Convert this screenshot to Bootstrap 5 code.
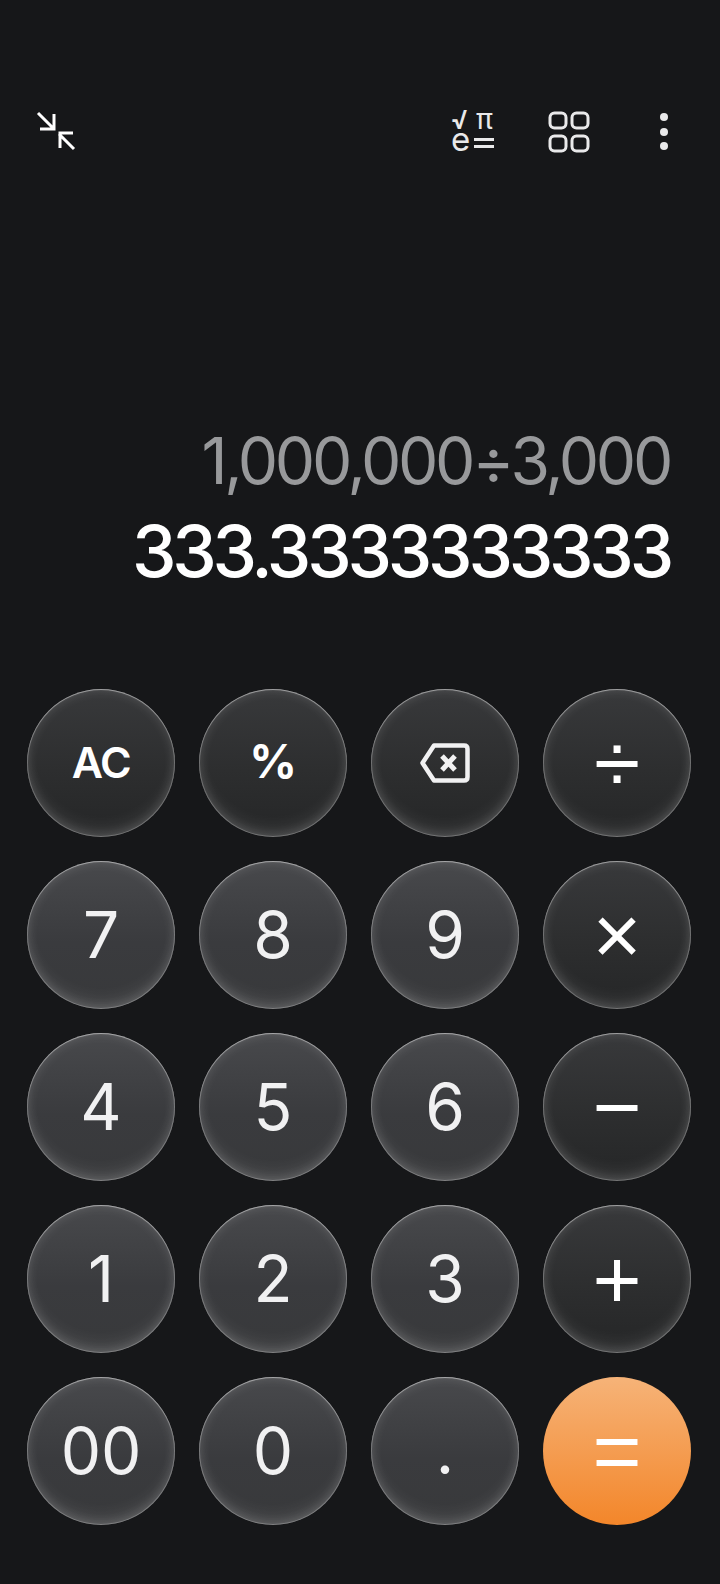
<!DOCTYPE html>
<html lang="en">
<head>
    <meta charset="UTF-8">
    <meta name="viewport" content="width=device-width, initial-scale=1.0">
    <title>Calculator</title>
    <link href="https://cdn.jsdelivr.net/npm/bootstrap@5.3.0/dist/css/bootstrap.min.css" rel="stylesheet">
    <style>
        body {
            background-color: #161719;
            color: #fff;
            font-family: Inter, "Liberation Sans", sans-serif;
        }
        .calc-page {
            min-height: 1584px;
            padding: 111px 28px 59px 27px;
        }
        .calc-top {
            height: 42px;
            padding: 0 24px 0 10px;
        }
        .calc-top svg {
            display: block;
            overflow: visible;
        }
        .calc-tools {
            gap: 53px;
        }
        .calc-tools svg:last-child {
            margin-left: 17px;
        }
        .calc-display {
            padding-right: 22px;
            margin-bottom: 88px;
        }
        .calc-expr {
            color: #98999b;
            font-size: 64px;
            letter-spacing: -3.3px;
            line-height: 80px;
            margin-bottom: 0;
        }
        .calc-result {
            font-size: 71px;
            font-weight: 500;
            letter-spacing: -4.2px;
            line-height: 100px;
        }
        .calc-keys {
            display: grid;
            grid-template-columns: repeat(4, 148px);
            gap: 24px;
        }
        .calc-key {
            width: 148px;
            height: 148px;
            border: 0;
            border-radius: 50%;
            padding: 0;
            color: #f1f1f2;
            font-size: 64px;
            line-height: 1;
            background: linear-gradient(#48494c, #3a3b3e 55%, #38393b);
            box-shadow: inset 0 1px 1px rgba(255, 255, 255, .34), inset 0 0 0 1px rgba(255, 255, 255, .22), inset 0 0 12px rgba(255, 255, 255, .17), inset 0 -14px 18px -8px rgba(255, 255, 255, .14);
        }
        .calc-key.key-dark {
            color: #fff;
            background: linear-gradient(#38393b, #2d2e2f 55%, #252627);
        }
        .calc-key.key-fn {
            font-size: 43px;
            font-weight: 600;
            letter-spacing: -1.5px;
            padding-bottom: 2px;
        }
        .calc-key.key-pct {
            font-size: 47px;
            font-weight: 700;
            letter-spacing: 0;
            padding-bottom: 5px;
        }
        .calc-key.key-op {
            font-family: "Liberation Sans", sans-serif;
            font-size: 84px;
        }
        .calc-key.key-eq {
            color: #fff;
            font-family: "Liberation Sans", sans-serif;
            font-size: 84px;
            background: linear-gradient(#f6b378, #f3862a);
            box-shadow: none;
        }
    </style>
</head>
<body>
    <div class="calc-page d-flex flex-column">
        <div class="calc-top d-flex justify-content-between align-items-start">
            <svg width="40" height="40" viewBox="0 0 40 40" fill="none" stroke="#fff" stroke-width="3">
                <path d="M1 2 16 17M3 18H17V3M37 38 22 23M23 37V22H36"/>
            </svg>
            <div class="calc-tools d-flex align-items-start">
                <svg width="44" height="42" viewBox="0 0 44 42" fill="#e9e9ea" font-family="Inter">
                    <text x="0" y="18" font-size="26" font-weight="600">√</text>
                    <text x="25" y="18" font-size="28">π</text>
                    <text x="0" y="40" font-size="33">e</text>
                    <path d="M23 27H43V30H23ZM23 34H43V37H23Z"/>
                </svg>
                <svg width="42" height="42" viewBox="0 0 42 42" fill="none" stroke="#e9e9ea" stroke-width="3">
                    <rect x="2" y="2" width="16" height="15" rx="4.5"/>
                    <rect x="24" y="2" width="16" height="15" rx="4.5"/>
                    <rect x="2" y="25" width="16" height="15" rx="4.5"/>
                    <rect x="24" y="25" width="16" height="15" rx="4.5"/>
                </svg>
                <svg width="8" height="42" viewBox="0 0 8 42" fill="#e9e9ea">
                    <circle cx="4" cy="6" r="4"/>
                    <circle cx="4" cy="21" r="4"/>
                    <circle cx="4" cy="35" r="4"/>
                </svg>
            </div>
        </div>

        <div class="calc-display mt-auto text-end text-nowrap">
            <div class="calc-expr">1,000,000÷3,000</div>
            <div class="calc-result">333.3333333333</div>
        </div>

        <div class="calc-keys">
            <button type="button" class="calc-key key-dark key-fn">AC</button>
            <button type="button" class="calc-key key-dark key-fn key-pct">%</button>
            <button type="button" class="calc-key key-dark d-flex align-items-center justify-content-center" aria-label="Backspace">
                <svg width="50" height="40" viewBox="0 0 50 40" fill="none" stroke="#f1f1f2" stroke-width="4.5" stroke-linejoin="round">
                    <path d="M14 2.5H44Q47.5 2.5 47.5 6V34Q47.5 37.5 44 37.5H14L2.5 20Z"/>
                    <path d="M22 13 35 27M35 13 22 27" stroke-width="5"/>
                </svg>
            </button>
            <button type="button" class="calc-key key-dark key-op">÷</button>

            <button type="button" class="calc-key">7</button>
            <button type="button" class="calc-key">8</button>
            <button type="button" class="calc-key">9</button>
            <button type="button" class="calc-key key-dark key-op">×</button>

            <button type="button" class="calc-key">4</button>
            <button type="button" class="calc-key">5</button>
            <button type="button" class="calc-key">6</button>
            <button type="button" class="calc-key key-dark key-op">−</button>

            <button type="button" class="calc-key">1</button>
            <button type="button" class="calc-key">2</button>
            <button type="button" class="calc-key">3</button>
            <button type="button" class="calc-key key-dark key-op">+</button>

            <button type="button" class="calc-key">00</button>
            <button type="button" class="calc-key">0</button>
            <button type="button" class="calc-key">.</button>
            <button type="button" class="calc-key key-eq">=</button>
        </div>
    </div>

    <script src="https://cdn.jsdelivr.net/npm/bootstrap@5.3.0/dist/js/bootstrap.bundle.min.js"></script>
</body>
</html>
